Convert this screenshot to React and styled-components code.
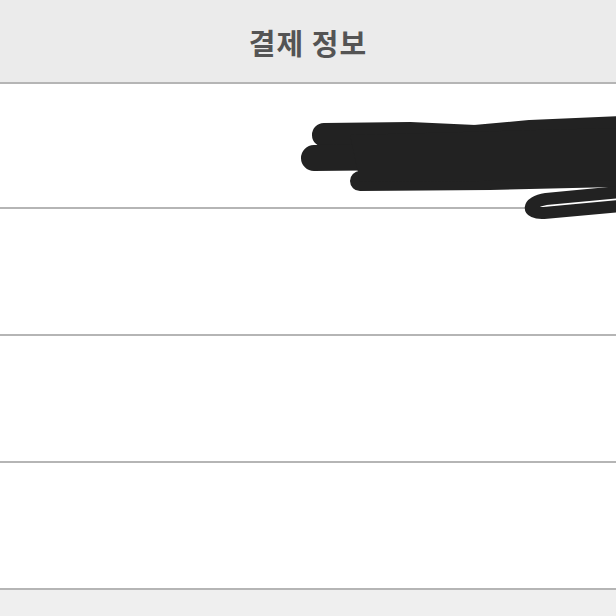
import React from 'react';
import styled, { createGlobalStyle } from 'styled-components';

const Global = createGlobalStyle`
  html, body { margin: 0; padding: 0; background: #ffffff; }
  body { font-family: "Noto Sans CJK KR", "Noto Sans", sans-serif; }
`;

const Page = styled.div`
  width: 616px;
  height: 616px;
  display: flex;
  flex-direction: column;
  overflow: hidden;
  background: #fff;
`;

const Header = styled.div`
  height: 82px;
  flex: none;
  background: #ebebeb;
  border-bottom: 2px solid #b5b5b5;
  display: flex;
  align-items: center;
  justify-content: center;
`;

const Title = styled.h1`
  margin: 2px 0 0;
  font-size: 29px;
  font-weight: 700;
  color: #545454;
  letter-spacing: 1px;
`;

const Row = styled.div`
  position: relative;
  height: ${p => p.h}px;
  flex: none;
  border-bottom: 2px solid #b5b5b5;
  background: #fff;
`;

const Footer = styled.div`
  flex: 1;
  background: #efefef;
`;

const Scribble = styled.svg`
  position: absolute;
  left: 290px;
  top: 26px;
  overflow: visible;
  z-index: 1;
`;

const ink = '#222';

const Redaction = () => (
  <Scribble width="326" height="110" viewBox="0 0 326 110">
    <g fill="none" stroke={ink} strokeLinecap="round" strokeLinejoin="round">
      <path d="M34 25 L120 24 L185 27 L240 22 L330 18" strokeWidth="24" />
      <path d="M24 48 L120 47 L330 41" strokeWidth="26" />
      <path d="M70 71 L200 70 L330 67" strokeWidth="20" />
      <path d="M330 82 L256 89 C236 92 236 104 254 103 L330 96" strokeWidth="12" />
    </g>
    <path d="M60 25 L326 18 L326 70 L70 72 Z" fill={ink} />
  </Scribble>
);

const App = () => (
  <Page>
    <Global />
    <Header>
      <Title>결제 정보</Title>
    </Header>
    <Row h={123}>
      <Redaction />
    </Row>
    <Row h={125} />
    <Row h={125} />
    <Row h={125} />
    <Footer />
  </Page>
);

export default App;
